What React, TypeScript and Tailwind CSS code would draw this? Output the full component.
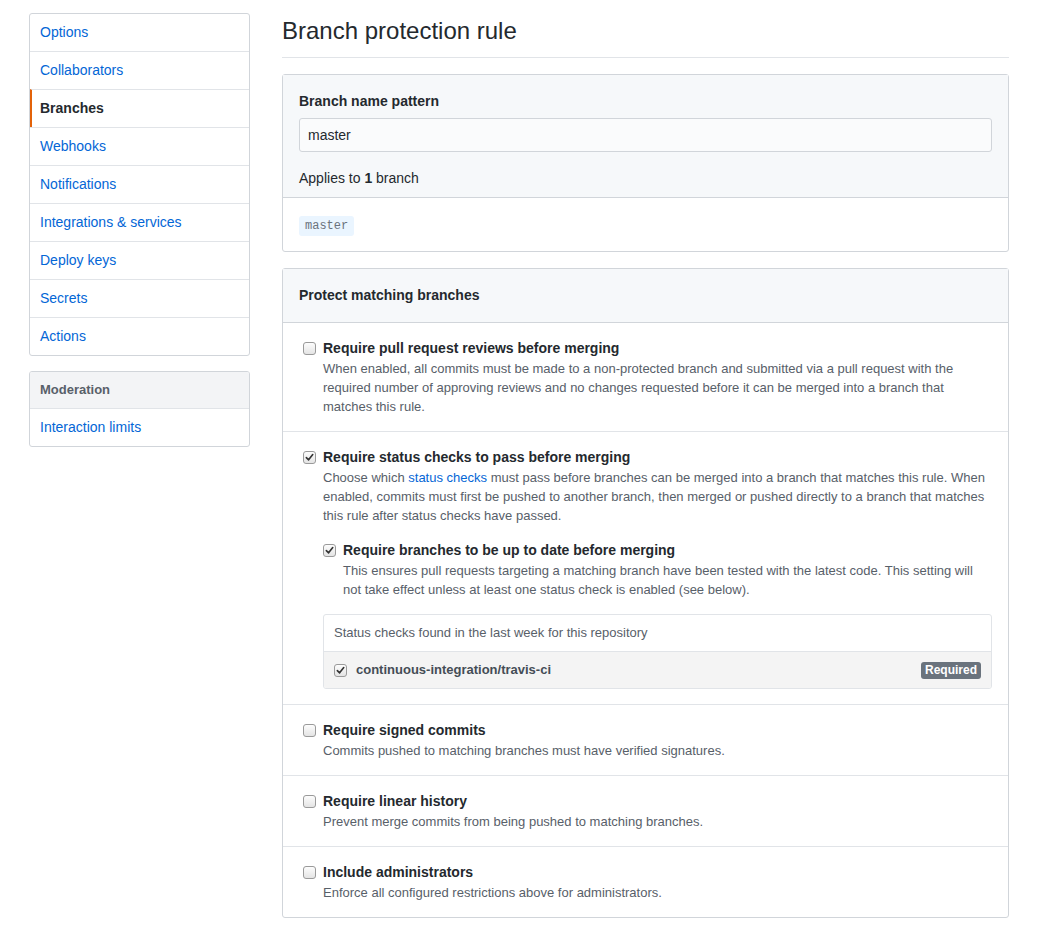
import React from "react";

function Check({ checked }: { checked?: boolean }) {
  return (
    <span className="flex h-[13px] w-[13px] shrink-0 items-center justify-center rounded-[3px] border border-[#9a9a9a] bg-gradient-to-b from-[#fdfdfd] to-[#e4e4e4]">
      {checked && (
        <svg width="9" height="9" viewBox="0 0 10 10">
          <path d="M1.5 5.2 L4 7.6 L8.6 1.8" fill="none" stroke="#333" strokeWidth="1.8" strokeLinecap="round" strokeLinejoin="round" />
        </svg>
      )}
    </span>
  );
}

function Option({
  checked,
  title,
  children,
  extra,
}: {
  checked?: boolean;
  title: string;
  children: React.ReactNode;
  extra?: React.ReactNode;
}) {
  return (
    <div className="flex gap-[7px]">
      <div className="flex pt-[4px]">
        <Check checked={checked} />
      </div>
      <div className="flex-1">
        <div className="text-[14px] font-bold leading-[21px] text-[#24292e]">{title}</div>
        <div className="text-[13px] leading-[19px] text-[#586069]">{children}</div>
        {extra}
      </div>
    </div>
  );
}

const sideItems = [
  "Options",
  "Collaborators",
  "Branches",
  "Webhooks",
  "Notifications",
  "Integrations & services",
  "Deploy keys",
  "Secrets",
  "Actions",
];

export default function App() {
  return (
    <div
      className="flex min-h-[930px] bg-white pl-[29px] pt-[13px] text-[14px] text-[#24292e]"
      style={{ fontFamily: '"Liberation Sans", Arial, sans-serif' }}
    >
      <div className="w-[221px] shrink-0">
        <div className="overflow-hidden rounded-[3px] border border-[#d1d5da]">
          {sideItems.map((it, i) => (
            <div
              key={it}
              className={
                (i > 0 ? "border-t border-[#e1e4e8] " : "") +
                (it === "Branches"
                  ? "border-l-2 border-l-[#e36209] pl-[8px] font-bold text-[#24292e] "
                  : "pl-[10px] text-[#0366d6] ") +
                "py-[8px] pr-[10px] leading-[21px]"
              }
            >
              {it}
            </div>
          ))}
        </div>
        <div className="mt-[15px] overflow-hidden rounded-[3px] border border-[#d1d5da]">
          <div className="border-b border-[#e1e4e8] bg-[#f3f4f6] px-[10px] py-[8px] text-[13px] font-bold leading-[20px] text-[#586069]">
            Moderation
          </div>
          <div className="px-[10px] py-[8px] leading-[21px] text-[#0366d6]">Interaction limits</div>
        </div>
      </div>

      <div className="ml-[32px] w-[727px] shrink-0">
        <div className="border-b border-[#e1e4e8] pb-[8px] text-[24px] leading-[36px] text-[#24292e]">
          Branch protection rule
        </div>

        <div className="mt-[16px] rounded-[3px] border border-[#d1d5da]">
          <div className="border-b border-[#d1d5da] bg-[#f6f8fa] px-[16px] pb-[8px] pt-[16px]">
            <div className="font-bold leading-[21px]">Branch name pattern</div>
            <div className="mt-[6px] h-[34px] rounded-[3px] border border-[#d1d5da] bg-[#fafbfc] px-[8px] leading-[32px] text-[#24292e]">
              master
            </div>
            <div className="mt-[16px] leading-[21px]">
              Applies to <b>1</b> branch
            </div>
          </div>
          <div className="px-[16px] pb-[14px] pt-[16px] leading-[21px]">
            <span
              className="rounded-[3px] bg-[#eaf5ff] px-[6px] py-[3px] text-[12px] text-[#6a737d]"
              style={{ fontFamily: '"Liberation Mono", "DejaVu Sans Mono", monospace' }}
            >
              master
            </span>
          </div>
        </div>

        <div className="mt-[16px] mb-[12px] rounded-[3px] border border-[#d1d5da]">
          <div className="border-b border-[#d1d5da] bg-[#f6f8fa] px-[16px] py-[16px] font-bold leading-[21px]">
            Protect matching branches
          </div>

          <div className="border-b border-[#e1e4e8] py-[15px] pl-[20px] pr-[16px]">
            <Option title="Require pull request reviews before merging">
              When enabled, all commits must be made to a non-protected branch and submitted via a pull request with the
              required number of approving reviews and no changes requested before it can be merged into a branch that
              matches this rule.
            </Option>
          </div>

          <div className="border-b border-[#e1e4e8] py-[15px] pl-[20px] pr-[16px]">
            <Option
              checked
              title="Require status checks to pass before merging"
              extra={
                <div>
                  <div className="mt-[15px]">
                    <Option checked title="Require branches to be up to date before merging">
                      This ensures pull requests targeting a matching branch have been tested with the latest code. This
                      setting will not take effect unless at least one status check is enabled (see below).
                    </Option>
                  </div>
                  <div className="mt-[15px] overflow-hidden rounded-[3px] border border-[#e1e4e8]">
                    <div className="border-b border-[#e1e4e8] px-[10px] py-[8px] text-[13px] leading-[20px] text-[#586069]">
                      Status checks found in the last week for this repository
                    </div>
                    <div className="flex items-center bg-[#f4f4f4] px-[10px] py-[8px]">
                      <Check checked />
                      <span className="ml-[9px] text-[13px] font-bold leading-[20px] text-[#444d56]">
                        continuous-integration/travis-ci
                      </span>
                      <span className="ml-auto rounded-[3px] bg-[#6a737d] px-[4px] text-[12px] font-bold leading-[17px] text-white">
                        Required
                      </span>
                    </div>
                  </div>
                </div>
              }
            >
              Choose which <span className="text-[#0366d6]">status checks</span> must pass before branches can be merged
              into a branch that matches this rule. When enabled, commits must first be pushed to another branch, then
              merged or pushed directly to a branch that matches this rule after status checks have passed.
            </Option>
          </div>

          <div className="border-b border-[#e1e4e8] py-[15px] pl-[20px] pr-[16px]">
            <Option title="Require signed commits">
              Commits pushed to matching branches must have verified signatures.
            </Option>
          </div>

          <div className="border-b border-[#e1e4e8] py-[15px] pl-[20px] pr-[16px]">
            <Option title="Require linear history">Prevent merge commits from being pushed to matching branches.</Option>
          </div>

          <div className="py-[15px] pl-[20px] pr-[16px]">
            <Option title="Include administrators">
              Enforce all configured restrictions above for administrators.
            </Option>
          </div>
        </div>
      </div>
    </div>
  );
}
